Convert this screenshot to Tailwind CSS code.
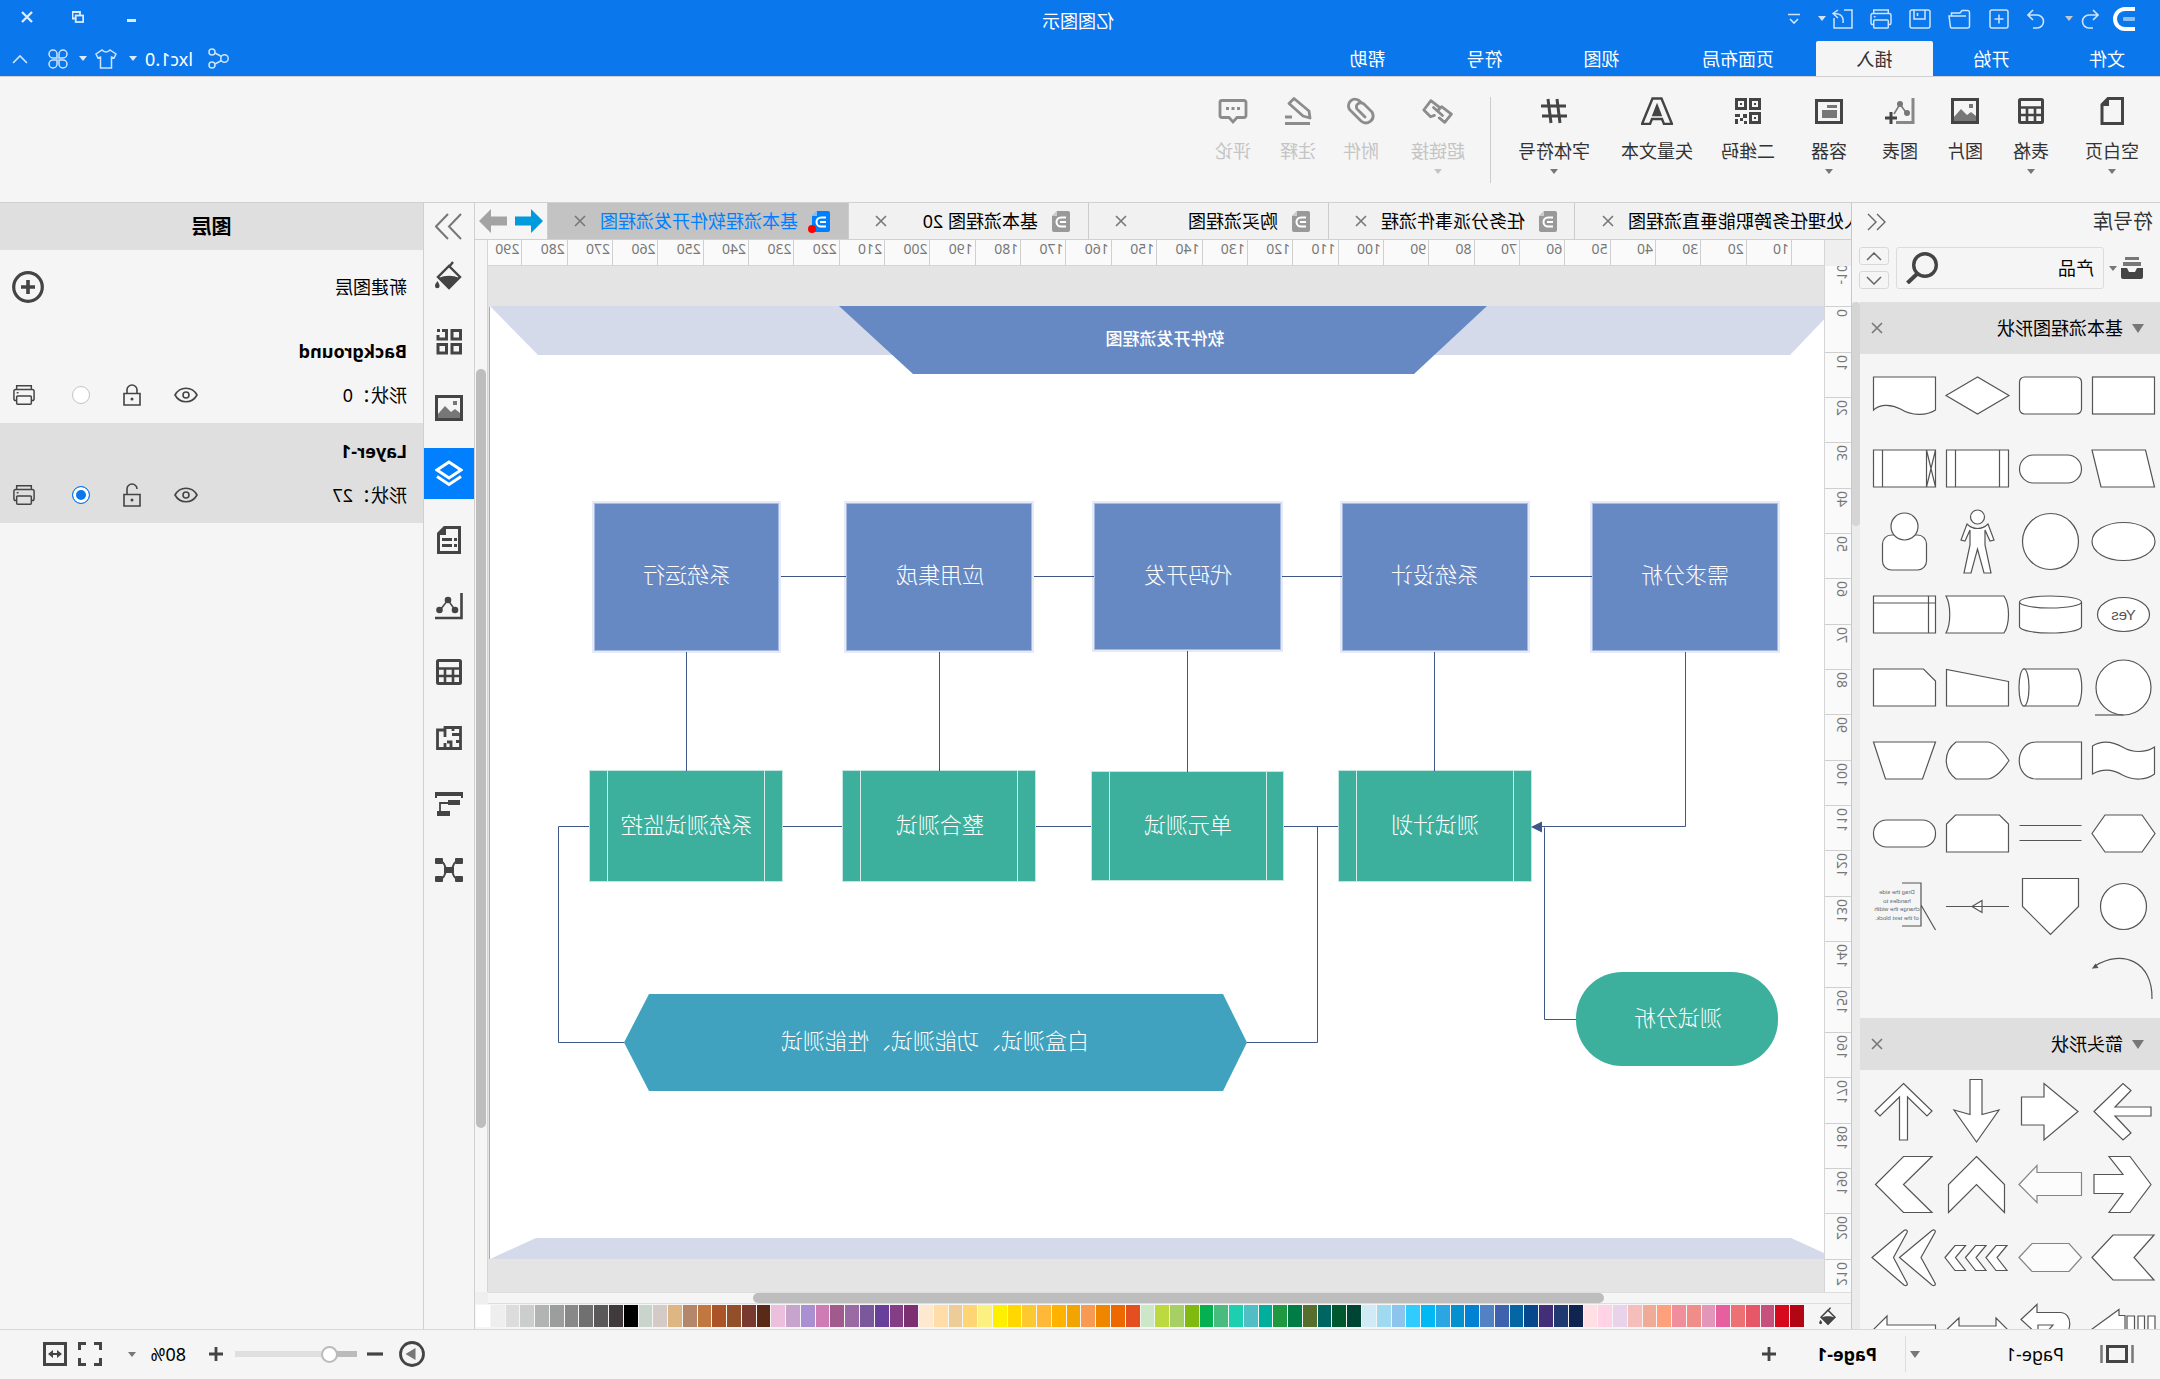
<!DOCTYPE html>
<html lang="zh-CN">
<head>
<meta charset="utf-8">
<title>亿图图示</title>
<script src="https://cdn.jsdelivr.net/npm/@tailwindcss/browser@4"></script>
</head>
<body class="overflow-hidden bg-[#f5f5f5]">
<svg class="hidden">
  <defs>
    <symbol id="i-doc" viewBox="0 0 18 21"><path d="M2 0h11l5 5v14a2 2 0 0 1-2 2H2a2 2 0 0 1-2-2V2a2 2 0 0 1 2-2z" fill="currentColor"/><path d="M13 0l5 5h-5z" fill="#fff" opacity=".5"/><path d="M4 6.500h5a4.500 4.500 0 0 1 0 9H4M4 11h6" fill="none" stroke="#fff" stroke-width="2"/></symbol>
    <symbol id="i-x" viewBox="0 0 12 12"><path d="M1 1l10 10M11 1L1 11" fill="none" stroke="currentColor" stroke-width="1.600"/></symbol>
    <symbol id="i-caret" viewBox="0 0 8 5"><path d="M0 0h8L4 5z" fill="currentColor"/></symbol>
    <symbol id="i-bucket" viewBox="0 0 28 30"><path d="M10 1l4 5M14 5L3 16l11 11 11-11z" fill="none" stroke="currentColor" stroke-width="2.400"/><path d="M4 17c6-3 14-3 20 0L14 28z" fill="currentColor"/><path d="M25.500 20c2 3 2.500 3.500 2.500 5a2.300 2.300 0 0 1-4.600 0c0-1.500.6-2 2.100-5z" fill="currentColor"/></symbol>
    <symbol id="i-image" viewBox="0 0 28 26"><rect x="1.500" y="1.500" width="25" height="23" fill="none" stroke="#444" stroke-width="3"/><path d="M3 23v-5l5-4 4 3 6-6 7 8v4z" fill="#777"/><rect x="6" y="6" width="4" height="4" fill="#777"/></symbol>
    <symbol id="i-table" viewBox="0 0 26 26"><rect x="1.500" y="1.500" width="23" height="23" rx="1" fill="none" stroke="#444" stroke-width="3"/><path d="M1 9.500h24M1 17h24M9 10v15M17 10v15" stroke="#444" stroke-width="2.600" fill="none"/></symbol>
    <symbol id="i-print" viewBox="0 0 24 22"><g fill="none" stroke="currentColor" stroke-width="1.600"><path d="M4 5V1h16v4M4 17H3a2 2 0 0 1-2-2V7a2 2 0 0 1 2-2h18a2 2 0 0 1 2 2v8a2 2 0 0 1-2 2h-1"/><rect x="4" y="12" width="16" height="9" rx="1"/><path d="M18 8.500h2"/></g></symbol>
    <symbol id="i-eye" viewBox="0 0 24 16"><g fill="none" stroke="currentColor" stroke-width="1.600"><path d="M1 8c5-9 17-9 22 0-5 9-17 9-22 0z"/><circle cx="12" cy="8" r="3"/></g></symbol>
  </defs>
</svg>
<div class="flex h-screen w-full flex-col overflow-hidden -scale-x-100 bg-[#f5f5f5] font-['Noto_Sans','Noto_Sans_CJK_SC',sans-serif] text-[18px] leading-6 text-black">

  <!-- Title bar and menu -->
  <header class="shrink-0 bg-[#0a77ec] text-white">
    <div class="flex h-[41px] items-center">
      <div class="flex flex-1 items-center pl-[25px] pb-1">
        <svg class="h-6 w-[22px]" viewBox="0 0 22 24"><path d="M0 2h10a10 10 0 0 1 0 20H0" fill="none" stroke="#fff" stroke-width="4"/><rect x="0" y="10" width="12" height="4" rx="1" fill="#8bbdf5"/></svg>
        <button aria-label="撤销" class="ml-[14px]"><svg class="h-5 w-[18px]" viewBox="0 0 18 20"><path d="M6 1L1 6l5 5M1 6h9a6.500 6.500 0 0 1 0 13H6" fill="none" stroke="#cfe3fb" stroke-width="1.600"/></svg></button>
        <svg class="ml-2 h-[5px] w-2 text-[#c8c8c8]"><use href="#i-caret"/></svg>
        <button aria-label="重做" class="ml-5"><svg class="h-5 w-[18px]" viewBox="0 0 18 20"><path d="M12 1l5 5-5 5M17 6H8a6.500 6.500 0 0 0 0 13h4" fill="none" stroke="#cfe3fb" stroke-width="1.600"/></svg></button>
        <button aria-label="新建" class="ml-[18px]"><svg class="size-5" viewBox="0 0 20 20"><g fill="none" stroke="#cfe3fb" stroke-width="1.500"><rect x="1" y="1" width="18" height="18" rx="2"/><path d="M10 5.500v9M5.500 10h9"/></g></svg></button>
        <button aria-label="打开" class="ml-[18px]"><svg class="h-5 w-6" viewBox="0 0 24 20"><path d="M1.500 17V3.500a2 2 0 0 1 2-2H9l2 2.500h8.500v3M5 7h17l-1.500 11a1.500 1.500 0 0 1-1.500 1H3.500a2 2 0 0 1-2-2V9" fill="none" stroke="#cfe3fb" stroke-width="1.500"/></svg></button>
        <button aria-label="保存" class="ml-4"><svg class="h-5 w-[22px]" viewBox="0 0 22 20"><g fill="none" stroke="#cfe3fb" stroke-width="1.500"><rect x="1" y="1" width="20" height="18" rx="2"/><path d="M6 1v9h11V1M13.500 4v3"/></g></svg></button>
        <button aria-label="打印" class="ml-4 text-[#cfe3fb]"><svg class="h-5 w-6"><use href="#i-print"/></svg></button>
        <button aria-label="导出" class="ml-4"><svg class="h-5 w-[21px]" viewBox="0 0 21 20"><path d="M9 1H1v18h18V9M10 14c-1-6 2-9.500 9-9.500M15 1l5 3.500L15 9" fill="none" stroke="#cfe3fb" stroke-width="1.500"/></svg></button>
        <svg class="ml-[6px] h-[5px] w-2 text-[#cfe3fb]"><use href="#i-caret"/></svg>
        <button aria-label="自定义" class="ml-[18px]"><svg class="h-3 w-3" viewBox="0 0 12 12"><path d="M0 1.500h12M2 6l4 4 4-4" fill="none" stroke="#cfe3fb" stroke-width="1.600"/></svg></button>
      </div>
      <h1>亿图图示</h1>
      <div class="flex flex-1 items-center justify-end pr-[21px] pb-2">
        <button aria-label="最小化" class="mt-2"><svg class="h-1 w-[9px]" viewBox="0 0 9 4"><path d="M0 1.500h9" stroke="#dcebfd" stroke-width="3"/></svg></button>
        <button aria-label="还原" class="ml-[43px]"><svg class="h-3 w-3" viewBox="0 0 12 12"><path d="M4 4V1h7.500v6.500H8.500" stroke="#dcebfd" stroke-width="1.800" fill="none"/><rect x=".8" y="4.500" width="7.500" height="6.500" fill="none" stroke="#dcebfd" stroke-width="1.800"/></svg></button>
        <button aria-label="关闭" class="ml-[39px]"><svg class="size-3" viewBox="0 0 12 12"><path d="M1 1l10 10M11 1L1 11" stroke="#dcebfd" stroke-width="2.400"/></svg></button>
      </div>
    </div>
    <div class="flex h-[35px] items-stretch">
      <nav class="flex flex-1 items-stretch [&>a]:flex [&>a]:items-center [&>a]:justify-center [&>a]:pt-px">
        <a href="#" class="mr-1 w-[106px]">文件</a>
        <a href="#" class="w-[117px]">开始</a>
        <a href="#" class="w-[117px] rounded-t-[2px] bg-[#f5f5f5] text-[#333]">插入</a>
        <a href="#" class="w-[156px]">页面布局</a>
        <a href="#" class="w-[117px]">视图</a>
        <a href="#" class="w-[117px]">符号</a>
        <a href="#" class="w-[117px]">帮助</a>
      </nav>
      <div class="flex items-center pr-3">
        <button aria-label="分享"><svg class="size-[21px]" viewBox="0 0 21 21"><g fill="none" stroke="#cfe3fb" stroke-width="1.500"><circle cx="4.500" cy="10.500" r="3.700"/><circle cx="17" cy="4" r="3"/><circle cx="17" cy="17" r="3"/><path d="M7.500 8.500L14 5M7.500 12.500L14 16"/></g></svg></button>
        <button class="ml-[15px] flex items-center">lxc1.0<svg class="ml-2 h-[5px] w-2 text-[#dcebfd]"><use href="#i-caret"/></svg></button>
        <button class="ml-3 flex items-center" aria-label="主题"><svg class="h-5 w-[22px]" viewBox="0 0 22 20"><path d="M7 1l-6 4 2 4 2.500-1v11h11V8L19 9l2-4-6-4c-2 2.500-6 2.500-8 0z" fill="none" stroke="#cfe3fb" stroke-width="1.500"/></svg><svg class="ml-2 h-[5px] w-2 text-[#dcebfd]"><use href="#i-caret"/></svg></button>
        <button aria-label="应用" class="ml-[11px]"><svg class="size-5" viewBox="0 0 20 20"><path d="M9 9H5a4 4 0 1 1 4-4zM11 9V5a4 4 0 1 1 4 4zM9 11v4a4 4 0 1 1-4-4zM11 11h4a4 4 0 1 1-4 4z" fill="none" stroke="#cfe3fb" stroke-width="1.500"/></svg></button>
        <button aria-label="折叠功能区" class="ml-5"><svg class="h-[10px] w-4" viewBox="0 0 16 10"><path d="M1 9l7-7 7 7" fill="none" stroke="#cfe3fb" stroke-width="1.600"/></svg></button>
      </div>
    </div>
  </header>

  <!-- Ribbon -->
  <div class="flex h-[127px] shrink-0 items-start border-y border-[#d0d0d0] pt-5 text-[#333] [&>button]:flex [&>button]:flex-col [&>button]:items-center [&>button]:whitespace-nowrap [&_svg.i]:h-7 [&_svg.i]:w-8 [&_span]:mt-[14px]">
    <button class="w-24"><svg class="i" viewBox="0 0 32 28"><path d="M5.500 1.500H20l6 6v19H5.500z" fill="none" stroke="#444" stroke-width="3"/><path d="M19 1l8 8h-8z" fill="#444"/></svg><span>空白页</span><svg class="mt-[6px] h-[5px] w-2 text-[#777]"><use href="#i-caret"/></svg></button>
    <button class="w-[66px]"><svg class="i"><use href="#i-table" x="3" y="1" width="26" height="26"/></svg><span>表格</span><svg class="mt-[6px] h-[5px] w-2 text-[#777]"><use href="#i-caret"/></svg></button>
    <button class="w-[66px]"><svg class="i"><use href="#i-image" x="2" y="1" width="28" height="26"/></svg><span>图片</span></button>
    <button class="w-16"><svg class="i" viewBox="0 0 32 28"><path d="M3 1v24.500h17" fill="none" stroke="#888" stroke-width="3"/><path d="M9 17l7-10 6 10" fill="none" stroke="#777" stroke-width="1.500"/><circle cx="9" cy="16" r="3" fill="#777"/><circle cx="16" cy="7" r="3" fill="#777"/><path d="M25 15v12M19 21h12" stroke="#444" stroke-width="3"/></svg><span>图表</span></button>
    <button class="w-[78px]"><svg class="i" viewBox="0 0 32 28"><rect x="3.500" y="3.500" width="25" height="22" fill="none" stroke="#444" stroke-width="3"/><path d="M8 8h10v3H8zM8 13h15v8H8z" fill="#777"/></svg><span>容器</span><svg class="mt-[6px] h-[5px] w-2 text-[#777]"><use href="#i-caret"/></svg></button>
    <button class="w-[84px]"><svg class="i" viewBox="0 0 32 28"><g fill="none" stroke="#444" stroke-width="3"><rect x="4.500" y="2.500" width="9" height="9"/><rect x="18.500" y="2.500" width="9" height="9"/><rect x="4.500" y="16.500" width="9" height="9"/></g><path d="M8 6h2v2H8zM22 6h2v2h-2zM8 20h2v2H8zM17 17h4v4h-4zM21 21h3v3h-3zM24 17h5v3h-5zM17 24h3v3h-3zM26 22h3v5h-3z" fill="#444"/></svg><span>二维码</span></button>
    <button class="w-[98px]"><svg class="i" viewBox="0 0 32 28"><path d="M11.500 1.500h9L31 27h-8l-2-5H11l-2 5H1zM16 9l-3.500 9h7z" fill="none" stroke="#444" stroke-width="2.400"/><path d="M16 8l-4 10h8z" fill="#444"/></svg><span>矢量文本</span></button>
    <button class="w-[108px]"><svg class="i" viewBox="0 0 32 28"><path d="M13 2l-3 24M22 2l-3 24M4 9h25M3 19h25" fill="none" stroke="#444" stroke-width="3"/></svg><span>字体符号</span><svg class="mt-[6px] h-[5px] w-2 text-[#777]"><use href="#i-caret"/></svg></button>
    <div class="ml-[9px] h-[86px] w-px bg-[#ccc]"></div>
    <button disabled class="w-[104px] text-[#c4c4c4]"><svg class="i" viewBox="0 0 32 28"><g fill="none" stroke="#8c8c8c" stroke-width="2.800" stroke-linejoin="round" stroke-linecap="round"><path d="M15.500 21l-5 5L3 18.500l9-8.500 3 2.500M20 18l4 1 6-7.500L22 3l-8 7.500 2 3.500" transform="rotate(6 16 14)"/><path d="M11.500 18.500l9-8"/></g></svg><span>超链接</span><svg class="mt-[6px] h-[5px] w-2"><use href="#i-caret"/></svg></button>
    <button disabled class="w-[50px] text-[#c4c4c4]"><svg class="i" viewBox="0 0 32 28"><path d="M15 6l3-2.500c6-4 13 2 9.500 9L16 24c-6 5-15-1-11-9l8-8c5-3 9 1 7 5l-8 8" fill="none" stroke="#8c8c8c" stroke-width="2.800" stroke-linecap="round"/></svg><span>附件</span></button>
    <button disabled class="w-[76px] text-[#c4c4c4]"><svg class="i" viewBox="0 0 32 28"><path d="M4 21l1-7L20 1.500l5 5L11 19zM22 20h7M4 26.500h25" fill="none" stroke="#8c8c8c" stroke-width="2.800" stroke-linejoin="round"/></svg><span>注释</span></button>
    <button disabled class="w-[54px] text-[#c4c4c4]"><svg class="i" viewBox="0 0 32 28"><path d="M5 3.500h22a2 2 0 0 1 2 2v13a2 2 0 0 1-2 2h-7L16 25l-4-4.500H5a2 2 0 0 1-2-2v-13a2 2 0 0 1 2-2z" fill="none" stroke="#8c8c8c" stroke-width="2.800"/><path d="M9 10h3v3H9zM14.500 10h3v3h-3zM20 10h3v3h-3z" fill="#8c8c8c"/></svg><span>评论</span></button>
  </div>

  <div class="flex min-h-0 flex-1">
    <!-- Symbol library -->
    <aside class="flex w-[309px] shrink-0 flex-col overflow-hidden border-r border-[#c8c8c8]">
      <div class="flex h-[38px] shrink-0 items-center justify-between pr-[15px] pl-[7px]">
        <h2 class="text-[20px] text-[#333]">符号库</h2>
        <button aria-label="收起"><svg class="h-[18px] w-[19px]" viewBox="0 0 19 18"><path d="M9 1L1 9l8 8M18 1l-8 8 8 8" fill="none" stroke="#666" stroke-width="1.400"/></svg></button>
      </div>
      <div class="flex h-[61px] shrink-0 items-start pt-[6px] pl-[17px]">
        <button class="flex h-[42px] items-center" aria-label="符号库菜单"><svg class="h-[22px] w-[22px]" viewBox="0 0 22 22"><path d="M4 0h14v3H4zM2 5h18v4H2z" fill="#777"/><path d="M0 11h6l2 4h6l2-4h6v9a2 2 0 0 1-2 2H2a2 2 0 0 1-2-2z" fill="#444"/></svg><svg class="ml-1 h-[5px] w-2 text-[#777]"><use href="#i-caret"/></svg></button>
        <div class="ml-[5px] flex h-[42px] w-[208px] items-center rounded-[3px] border border-[#dcdcdc] px-[9px]">
          <input aria-label="搜索符号" value="产品" class="w-0 flex-1 bg-transparent outline-none">
          <button aria-label="搜索"><svg class="h-8 w-8" viewBox="0 0 32 32"><circle cx="13" cy="13" r="11.300" fill="none" stroke="#444" stroke-width="3.400"/><path d="M20.500 21.500l10 9.500" stroke="#444" stroke-width="4"/></svg></button>
        </div>
        <div class="ml-[7px] flex flex-col gap-[6px]">
          <button aria-label="上" class="flex h-[18px] w-[30px] items-center justify-center rounded-[3px] border border-[#d8d8d8]"><svg class="h-[9px] w-4" viewBox="0 0 16 9"><path d="M1 8l7-7 7 7" fill="none" stroke="#666" stroke-width="1.500"/></svg></button>
          <button aria-label="下" class="flex h-[18px] w-[30px] items-center justify-center rounded-[3px] border border-[#d8d8d8]"><svg class="h-[9px] w-4" viewBox="0 0 16 9"><path d="M1 1l7 7 7-7" fill="none" stroke="#666" stroke-width="1.500"/></svg></button>
        </div>
      </div>
      <div class="flex min-h-0 flex-1">
        <div class="w-[300px] overflow-hidden">
          <div class="flex h-[52px] items-center bg-[#dfdfdf] pr-[11px] pl-4"><svg class="h-[9px] w-3 text-[#777]" viewBox="0 0 8 5" preserveAspectRatio="none"><path d="M0 0h8L4 5z" fill="currentColor"/></svg><h3 class="ml-[9px] flex-1">基本流程图形状</h3><button aria-label="关闭"><svg class="size-3 text-[#777]"><use href="#i-x"/></svg></button></div>
          <div class="mt-[5px] mb-[2px] grid w-[292px] grid-cols-4 [&>svg]:size-[73px] [&>svg]:fill-white [&>svg]:stroke-[#555] [&>svg]:stroke-[1.2]">
            <svg><rect x="5.500" y="18" width="62" height="37"/></svg>
            <svg><rect x="5.500" y="18" width="62" height="37" rx="5"/></svg>
            <svg><path d="M36.500 18L68 36.500 36.500 55 5 36.500z"/></svg>
            <svg><path d="M5.500 18h62v33c-5-5-16-7-27-1-11 7-26 7-35 1z"/></svg>
            <svg><path d="M14.500 18H68l-9 37H5.500z"/></svg>
            <svg><rect x="5.500" y="23" width="62" height="28" rx="14"/></svg>
            <svg><path d="M5.500 18h62v37h-62zM14.500 18v37M58.500 18v37"/></svg>
            <svg><path d="M5.500 18h62v37h-62zM14.500 18v37M58.500 18v37M5.500 18l9 37M14.500 18l-9 37"/></svg>
            <svg><ellipse cx="36.500" cy="36.500" rx="31.500" ry="19"/></svg>
            <svg><circle cx="36.500" cy="36.500" r="28"/></svg>
            <svg><path d="M26 19l-6 16 4 1 5-11v15l-6 28h7l6.500-24L43 68h7l-6-28V25l5 11 4-1-6-16c-6 6-15 6-21 0z"/><circle cx="36.500" cy="12" r="7"/></svg>
            <svg><rect x="14.500" y="30" width="44" height="35" rx="9"/><circle cx="36.500" cy="21.500" r="13.500"/></svg>
            <svg><ellipse cx="36.500" cy="36.500" rx="26" ry="17"/><text x="36.500" y="42" text-anchor="middle" font-size="15" class="fill-[#555] stroke-none font-['Liberation_Sans']">Yes</text></svg>
            <svg><path d="M5.500 24v25c4 8 58 8 62 0V24"/><ellipse cx="36.500" cy="24" rx="31" ry="6"/></svg>
            <svg><path d="M10 18h58c-5 9-5 28 0 37H10c-6-9-6-28 0-37z"/></svg>
            <svg><path d="M5.500 18h62v37h-62zM5.500 25h62M12.500 18v37"/></svg>
            <svg><circle cx="36.500" cy="36.500" r="27.500"/><path d="M36.500 64H65" /></svg>
            <svg><path d="M9 18h54c-6 6-6 31 0 37H9c-5-9-5-28 0-37z"/><ellipse cx="63" cy="36.500" rx="5" ry="18.500"/></svg>
            <svg><path d="M5.500 30.500l62-12V55h-62z"/></svg>
            <svg><path d="M17.500 18h50v37h-62V30z"/></svg>
            <svg><path d="M5.500 23c9 6 22 6 32 0 11-6 22-6 30-1v28c-9-5-20-5-30 1-11 6-24 5-32-1z"/></svg>
            <svg><path d="M5.500 18h45c23 0 23 37 0 37h-45z"/></svg>
            <svg><path d="M5 36.500C12 26 20 18 27 18h31c13 10 13 27 0 37H27c-7 0-15-8-22-18.500z"/></svg>
            <svg><path d="M5.500 18h62l-12 37h-37z"/></svg>
            <svg><path d="M5 36.500L18 18h37l13 18.500L55 55H18z"/></svg>
            <svg><path d="M5.500 28.500h62M5.500 43.500h62"/></svg>
            <svg><path d="M14.500 18h44l9 9v28h-62V27z"/></svg>
            <svg><rect x="5.500" y="23" width="62" height="27" rx="13"/></svg>
            <svg><circle cx="36.500" cy="36.500" r="23"/></svg>
            <svg><path d="M8.500 8.500h56v28l-28 28-28-28z"/></svg>
            <svg><path d="M5 36.500h63M32 30.500l10 6-10 6z"/></svg>
            <svg><path d="M39 13H20v43h19M20 35L5.500 60" fill="none"/><g text-anchor="middle" font-size="6" class="fill-[#666] stroke-none font-['Liberation_Sans']"><text x="44" y="24">Drag the side</text><text x="44" y="33">handles to</text><text x="44" y="41">change the width</text><text x="44" y="50">of the text block.</text></g></svg>
            <svg><path d="M8 56C7 18 38 6 65 23" fill="none"/><path d="M67 25l-4.500-.5 2-3z" class="fill-[#444]"/></svg>
          </div>
          <div class="flex h-[52px] items-center bg-[#dfdfdf] pr-[11px] pl-4"><svg class="h-[9px] w-3 text-[#777]" viewBox="0 0 8 5" preserveAspectRatio="none"><path d="M0 0h8L4 5z" fill="currentColor"/></svg><h3 class="ml-[9px] flex-1">箭头形状</h3><button aria-label="关闭"><svg class="size-3 text-[#777]"><use href="#i-x"/></svg></button></div>
          <div class="mt-[5px] grid w-[292px] grid-cols-4 [&>svg]:size-[73px] [&>svg]:fill-white [&>svg]:stroke-[#555] [&>svg]:stroke-[1.2]">
            <svg><path d="M66 36.500L37 8.500l-8 7L45 32H9v9h36L29 58l8 7z"/></svg>
            <svg><path d="M9 36.500l34-28V22h22.500v28H43v15z"/></svg>
            <svg><path d="M37.500 67L60 35l-16 4.500v-35H32v35L15 35z"/></svg>
            <svg><path d="M37.500 8.500L9 36l5 5 19.500-19v43h8V22L61 41l5-5z"/></svg>
            <svg><path d="M9 36.500L30 8.500h21L37 26.500h29v19H37l14 19H30z"/></svg>
            <svg opacity=".7"><path d="M68 36.500l-18-19v7H5.500v23H50v7z"/></svg>
            <svg><path d="M37.500 8.500l-28 28v28l28-28 28 28v-28z"/></svg>
            <svg><path d="M65.500 36.500l-28-28H9l28.500 28-28.500 28h28.500z"/></svg>
            <svg><path d="M68 36.500L47 14H6l20 22.500L6 59h41z"/></svg>
            <svg opacity=".7"><path d="M68 36.500l-13-14H18l-12.500 14 12.500 14h37z"/></svg>
            <svg><path d="M69 36.500L59 24.500H48.500l10 12-10 13H59zM48.500 36.500l-10-12H28l10 12-10 13h10.500zM28 36.500l-10-12H7l10 12-10 13h11z"/></svg>
            <svg><path d="M69 36.500L37 9.500c-2-1.500-4 0-3 2l13.500 25L34 62c-1 2 1 3.500 3 2zM41.500 36.500L9 9.500c-2-1.500-4 0-3 2l14 25L6 62c-1 2 1 3.500 3 2z"/></svg>
            <svg><path d="M72 38L41 15.500v6h-6V50h6zM25.500 22H33v28h-7.500zM15.500 22H22v28h-6.500zM5 22h7v28H5z"/></svg>
            <svg><path d="M66 25.500l-16-15v8H27c-13 0-13 21 0 26h22V31H34l8 9h8z"/></svg>
            <svg><path d="M72 40L55 24v8H18v-8L2 40l16 14h37z"/></svg>
            <svg><path d="M72 40L54 22v9H5.500v18H54z"/></svg>
          </div>
        </div>
        <div class="flex-1 bg-[#ebebeb]"><div class="h-[224px] rounded-full bg-[#d5d5d5]"></div></div>
      </div>
    </aside>

    <!-- Documents -->
    <main class="flex min-w-0 flex-1 flex-col">
      <div class="flex h-[37px] shrink-0 items-stretch border-b border-[#d0d0d0] whitespace-nowrap [&>div]:flex [&>div]:items-center [&>div]:border-r [&>div]:border-[#ccc] [&>div]:bg-[#f1f1f1]">
        <div class="w-[277px] justify-end overflow-hidden pr-[27px]"><a href="#">人处理任务跨职能垂直流程图</a><button aria-label="关闭" class="ml-[14px]"><svg class="size-3 text-[#777]"><use href="#i-x"/></svg></button></div>
        <div class="w-[246px] pr-[26px] pl-[17px]"><svg class="h-[21px] w-[18px] text-[#999]"><use href="#i-doc"/></svg><a href="#" class="ml-[14px] flex-1">任务分派事件流程</a><button aria-label="关闭"><svg class="size-3 text-[#777]"><use href="#i-x"/></svg></button></div>
        <div class="w-[240px] pr-[26px] pl-[18px]"><svg class="h-[21px] w-[18px] text-[#999]"><use href="#i-doc"/></svg><a href="#" class="ml-[14px] flex-1">购买流程图</a><button aria-label="关闭"><svg class="size-3 text-[#777]"><use href="#i-x"/></svg></button></div>
        <div class="w-[240px] pr-[26px] pl-[18px]"><svg class="h-[21px] w-[18px] text-[#999]"><use href="#i-doc"/></svg><a href="#" class="ml-[14px] flex-1">基本流程图 20</a><button aria-label="关闭"><svg class="size-3 text-[#777]"><use href="#i-x"/></svg></button></div>
        <div class="w-[301px] pr-[26px] pl-[18px] !bg-[#c3c3c3]"><span class="relative h-[21px] w-[18px]"><svg class="h-[21px] w-[18px] text-[#0080ff]"><use href="#i-doc"/></svg><i class="absolute -right-1 -bottom-px size-2 rounded-full bg-[#f00]"></i></span><a href="#" class="ml-[14px] flex-1 text-[#0080ff]">基本流程软件开发流程图</a><button aria-label="关闭"><svg class="size-3 text-[#777]"><use href="#i-x"/></svg></button></div>
        <span class="flex items-center gap-2 pl-1"><button aria-label="上一个"><svg class="h-6 w-7" viewBox="0 0 28 24"><path d="M0 12L12 0v7.500h16v9H12V24z" fill="#009bdc"/></svg></button><button aria-label="下一个"><svg class="h-6 w-7" viewBox="0 0 28 24"><path d="M28 12L16 0v7.500H0v9h16V24z" fill="#a3a3a3"/></svg></button></span>
      </div>
      <div class="grid min-h-0 flex-1 grid-cols-[27px_minmax(0,1fr)_13px] grid-rows-[26px_minmax(0,1fr)_12px]">
        <div class="border-r border-[#d5d5d5] bg-[#efefef]"></div>
        <div class="overflow-hidden border-b border-[#d5d5d5] bg-[#fafafa]"><div id="ruler-x" class="mr-[-11px] ml-8 flex h-full text-[14px] leading-[18px] text-[#777]"></div></div>
        <div class="border-l border-[#d5d5d5] bg-[#f5f5f5]"></div>
        <div class="overflow-hidden border-r border-[#d5d5d5] bg-[#fafafa]"><div id="ruler-y" class="-mt-[5px] flex h-[calc(100%+17px)] flex-col text-[14px] leading-[18px] text-[#777]"></div></div>
        <div class="relative overflow-hidden bg-[#e4e4e4]">
          <svg class="absolute top-0 left-0 h-[1026px] w-[1336px]" viewBox="336 266 1336 1026">
            <path d="M323 306h1347v953H323z" fill="#fff"/><path d="M1670.500 307v952" stroke="#aaa"/>
            <path d="M323 306h1347l-48 49H370z" fill="#d4daea"/>
            <path d="M673 306h648l-74 68H746z" fill="#6689c4"/>
            <path d="M369 1238h1255l46 21H323z" fill="#d4daea"/>
            <g fill="none" stroke="#e6eaf5" stroke-width="4"><path d="M382 503h186v148H382zM632 503h186v148H632zM879 503h187v147H879zM1128 503h186v148h-186zM1381 503h185v148h-185z"/></g>
            <g fill="#6689c4" stroke="#a5bae2" stroke-width="1"><path d="M382.500 503.500h185v147h-185zM632.500 503.500h185v147h-185zM879.500 503.500h186v146h-186zM1128.500 503.500h185v147h-185zM1381.500 503.500h184v147h-184z"/></g>
            <g fill="#3db09d" stroke="#c3e6df" stroke-width="1"><path d="M628.500 770.500h193v111h-193zM876.500 771.500h192v109h-192zM1124.500 770.500h193v111h-193zM1377.500 770.500h193v111h-193z"/><path d="M646.500 771v110M803.500 771v110M893.500 772v108M1050.500 772v108M1142.500 771v110M1299.500 771v110M1395.500 771v110M1552.500 771v110" stroke="#d4ede8"/></g>
            <rect x="382" y="972" width="202" height="94" rx="46" fill="#3db09d"/>
            <path d="M913 1042.500L937 994h574l25 48.500-25 48.500H937z" fill="#40a2be"/>
            <g fill="none" stroke="#3f5786"><path d="M568 576.500h62M818 576.500h60M1066 576.500h60M1314 576.500h65M725.500 652v119M972.500 651v121M1220.500 652v119M1473.500 652v119M474.500 652v174.500H620M822 826.500h54M1069 826.500h55M1318 826.500h59M584 1019.500h31.500v-192M913 1042.500h-70.500v-216M1536 1042.500h65.500v-216H1571"/></g>
            <path d="M629 827l-11-5.500v11z" fill="#3f5786"/>
            <text x="995" y="345" text-anchor="middle" font-size="17" class="fill-white font-medium">软件开发流程图</text>
            <g text-anchor="middle" font-size="22" class="fill-white font-light">
              <text x="475" y="583">需求分析</text><text x="725" y="583">系统设计</text><text x="972" y="583">代码开发</text><text x="1220" y="583">应用集成</text><text x="1473" y="583">系统运行</text>
              <text x="725" y="833">测试计划</text><text x="972" y="833">单元测试</text><text x="1220" y="833">整合测试</text><text x="1473" y="833">系统测试监控</text>
              <text x="482" y="1026">测试分析</text><text x="1225" y="1049">白盒测试、功能测试、性能测试</text>
            </g>
          </svg>
        </div>
        <div class="border-l border-[#d5d5d5] bg-[#f5f5f5] px-px pt-[103px]"><div class="h-[759px] rounded-full bg-[#bdbdbd]"></div></div>
        <div class="border-y border-[#ddd] bg-[#f5f5f5]"></div>
        <div class="border-y border-[#ddd] bg-[#f5f5f5] pr-[265px] pl-[220px]"><div class="h-full rounded-full bg-[#bdbdbd]"></div></div>
        <div class="bg-[#efefef]"></div>
      </div>
      <div class="flex h-[25px] shrink-0 items-center pr-px pb-px pl-[14px]">
        <svg class="h-[19px] w-[18px] shrink-0 text-[#444]"><use href="#i-bucket"/></svg>
        <div id="swatches" class="ml-[14px] flex h-[22px] flex-1"></div>
      </div>
    </main>

    <!-- Tool strip -->
    <nav class="flex w-[52px] shrink-0 flex-col items-stretch gap-[15px] border-x border-[#d0d0d0] text-[#444] [&>button]:flex [&>button]:h-[51px] [&>button]:items-center [&>button]:justify-center">
      <button aria-label="展开" class="-mb-[19px] pb-1"><svg class="h-[27px] w-[27px]" viewBox="0 0 27 27"><path d="M1 1l12 12.500L1 26M14 1l12 12.500L14 26" fill="none" stroke="#777" stroke-width="2"/></svg></button>
      <button aria-label="填充"><svg class="h-[30px] w-7"><use href="#i-bucket"/></svg></button>
      <button aria-label="组件"><svg class="size-[26px]" viewBox="0 0 26 26"><g fill="none" stroke="#444" stroke-width="3"><rect x="1.500" y="1.500" width="8.500" height="8.500"/><rect x="1.500" y="15.500" width="8.500" height="8.500"/><rect x="15.500" y="15.500" width="8.500" height="8.500"/><path d="M20 1.500h-4.500V10H24V6M22 1.500h3"/></g></svg></button>
      <button aria-label="图片"><svg class="h-[26px] w-7"><use href="#i-image"/></svg></button>
      <button aria-label="图层" class="bg-[#0080ff]"><svg class="h-[27px] w-7" viewBox="0 0 28 27"><path d="M14 2l12 8-12 8L2 10zM2 16.500l12 8 12-8" fill="none" stroke="#fff" stroke-width="3"/></svg></button>
      <button aria-label="注释"><svg class="h-7 w-6" viewBox="0 0 24 28"><path d="M1.500 1.500h15l6 6v19h-21z" fill="none" stroke="#444" stroke-width="3"/><path d="M15 1l8 8h-8zM4 12h3v3H4zM9 12h10v3H9zM4 18h3v3H4zM9 18h10v3H9z" fill="#444"/></svg></button>
      <button aria-label="图表"><svg class="size-7" viewBox="0 0 28 28"><path d="M1.500 1v25H28" fill="none" stroke="#444" stroke-width="2.600"/><path d="M8 18l7-10 8 10" fill="none" stroke="#444" stroke-width="1.500"/><circle cx="8" cy="18" r="3.300" fill="#444"/><circle cx="15" cy="8" r="3.300" fill="#444"/><circle cx="23.500" cy="18" r="3.300" fill="#444"/></svg></button>
      <button aria-label="表格"><svg class="size-[26px]"><use href="#i-table"/></svg></button>
      <button aria-label="平面图"><svg class="h-6 w-[26px]" viewBox="0 0 26 24"><path d="M1.500 1.500H17V4h7.500v18.500h-23zM17 4v7M1.500 8.500H10M9 1.500V5M1.500 15.500H6M11 22v-6h4M17 17v5" fill="none" stroke="#444" stroke-width="2.800"/></svg></button>
      <button aria-label="甘特图"><svg class="h-6 w-7" viewBox="0 0 28 24"><path d="M0 0h28v6h-2V4H2v2H0zM3 8h12v5H3zM13 19h13v5H13z" fill="#444"/><path d="M15 11h8v8" fill="none" stroke="#444" stroke-width="1.800"/></svg></button>
      <button aria-label="思维导图"><svg class="h-6 w-7" viewBox="0 0 28 24"><path d="M4 3c8 0 4 9 10 9s2-9 10-9M4 21c8 0 4-9 10-9s2 9 10 9" fill="none" stroke="#444" stroke-width="2"/><g fill="#444"><rect width="8" height="6" rx="1"/><rect x="20" width="8" height="6" rx="1"/><rect y="18" width="8" height="6" rx="1"/><rect x="20" y="18" width="8" height="6" rx="1"/><rect x="9" y="9" width="10" height="6"/></g></svg></button>
    </nav>

    <!-- Layers panel -->
    <aside class="w-[423px] shrink-0">
      <h2 class="flex h-[47px] items-center justify-center bg-[#dfdfdf] text-[20px] font-bold">图层</h2>
      <div class="flex h-[73px] items-center justify-between pr-3 pl-4"><span>新建图层</span><button aria-label="新建图层"><svg class="size-8" viewBox="0 0 32 32"><circle cx="16" cy="16" r="14.300" fill="none" stroke="#444" stroke-width="3.200"/><path d="M16 9v14M9 16h14" stroke="#444" stroke-width="3.600"/></svg></button></div>
      <div class="h-[100px] pt-4 pr-[13px] pl-4">
        <h3 class="font-bold">Background</h3>
        <div class="mt-5 flex items-center text-[#444]"><span class="flex-1 text-black">形状：0</span>
          <button aria-label="可见"><svg class="h-4 w-6"><use href="#i-eye"/></svg></button>
          <button aria-label="锁定" class="ml-[33px]"><svg class="h-[22px] w-[18px]" viewBox="0 0 18 22"><path d="M1 9.500h16V21H1zM4 9V6a5 5 0 0 1 10 0v3" fill="none" stroke="#444" stroke-width="1.600"/><circle cx="9" cy="15" r="1.500" fill="#444"/></svg></button>
          <input type="radio" name="layer" aria-label="Background" class="ml-[33px] size-[18px] appearance-none rounded-full border border-[#c4c4c4] bg-white">
          <button aria-label="打印" class="ml-[37px]"><svg class="h-[22px] w-[22px]"><use href="#i-print"/></svg></button></div>
      </div>
      <div class="h-[100px] bg-[#dfdfdf] pt-4 pr-[13px] pl-4">
        <h3 class="font-bold">Layer-1</h3>
        <div class="mt-5 flex items-center text-[#444]"><span class="flex-1 text-black">形状：27</span>
          <button aria-label="可见"><svg class="h-4 w-6"><use href="#i-eye"/></svg></button>
          <button aria-label="锁定" class="ml-[33px]"><svg class="h-6 w-[18px]" viewBox="0 0 18 24"><path d="M1 11.500h16V23H1zM4 11V6a5 5 0 0 1 10 0" fill="none" stroke="#444" stroke-width="1.600" transform="matrix(-1 0 0 1 18 0)"/><circle cx="9" cy="17" r="1.500" fill="#444"/></svg></button>
          <input type="radio" name="layer" aria-label="Layer-1" checked class="ml-[33px] size-[18px] appearance-none rounded-full border border-[#0a77ec] bg-[#0a77ec] shadow-[inset_0_0_0_3px_#fff]">
          <button aria-label="打印" class="ml-[37px]"><svg class="h-[22px] w-[22px]"><use href="#i-print"/></svg></button></div>
      </div>
    </aside>
  </div>

  <!-- Status bar -->
  <footer class="flex h-[50px] shrink-0 items-center border-t border-[#d8d8d8] pr-[43px] pb-px pl-[26px]">
    <button aria-label="页面视图"><svg class="h-[18px] w-[34px]" viewBox="0 0 34 18"><path d="M1.500 0v18M32.500 0v18" stroke="#777" stroke-width="2.500"/><rect x="7.500" y="1.500" width="19" height="15" fill="none" stroke="#444" stroke-width="3"/></svg></button>
    <button class="ml-9 w-[144px] text-left">Page-1</button>
    <svg class="h-[7px] w-[10px] text-[#777]" viewBox="0 0 8 5" preserveAspectRatio="none"><path d="M0 0h8L4 5z" fill="currentColor"/></svg>
    <div class="ml-1 h-9 w-px bg-[#ddd]"></div>
    <button class="ml-7 font-bold">Page-1</button>
    <button aria-label="添加页面" class="ml-10"><svg class="size-4" viewBox="0 0 16 16"><path d="M8 1v14M1 8h14" stroke="#444" stroke-width="2.800"/></svg></button>
    <div class="flex-1"></div>
    <button aria-label="播放"><svg class="size-[26px]" viewBox="0 0 26 26"><circle cx="13" cy="13" r="11.500" fill="none" stroke="#444" stroke-width="2.800"/><path d="M9.500 7l10 6-10 6z" fill="#777"/></svg></button>
    <button aria-label="缩小" class="ml-4"><svg class="size-4" viewBox="0 0 16 16"><path d="M0 8h16" stroke="#444" stroke-width="3.200"/></svg></button>
    <input type="range" aria-label="缩放" min="0" max="100" value="18" class="ml-[10px] h-[18px] w-[122px] appearance-none bg-[linear-gradient(to_right,#bbb_24%,#dfdfdf_24%)] bg-[length:100%_6px] bg-center bg-no-repeat [&::-webkit-slider-thumb]:size-[17px] [&::-webkit-slider-thumb]:appearance-none [&::-webkit-slider-thumb]:rounded-full [&::-webkit-slider-thumb]:border-2 [&::-webkit-slider-thumb]:border-[#bbb] [&::-webkit-slider-thumb]:bg-white">
    <button aria-label="放大" class="ml-[11px]"><svg class="size-4" viewBox="0 0 16 16"><path d="M8 1v14M1 8h14" stroke="#444" stroke-width="2.800"/></svg></button>
    <button class="ml-[22px] flex w-[58px] items-center justify-between">80%<svg class="h-[5px] w-2 text-[#777]"><use href="#i-caret"/></svg></button>
    <button aria-label="全屏" class="ml-[26px]"><svg class="size-6" viewBox="0 0 24 24"><path d="M8 1.500H1.500V8M16 1.500h6.500V8M8 22.500H1.500V16M16 22.500h6.500V16" fill="none" stroke="#444" stroke-width="3"/></svg></button>
    <button aria-label="适合宽度" class="ml-[11px]"><svg class="size-6" viewBox="0 0 24 24"><rect x="1.500" y="1.500" width="21" height="21" fill="none" stroke="#444" stroke-width="3"/><path d="M5 12l5-4v3h4V8l5 4-5 4v-3h-4v3z" fill="#444"/></svg></button>
  </footer>
</div>
<script>
  // Rulers: one cell per 10 mm
  const rx = document.getElementById('ruler-x');
  for (let n = 10; n <= 290; n += 10) {
    rx.insertAdjacentHTML('beforeend', `<span class="flex-1 basis-0 overflow-hidden border-l border-[#d0d0d0] pl-[2px]">${n}</span>`);
  }
  const ry = document.getElementById('ruler-y');
  for (let n = -10; n <= 210; n += 10) {
    ry.insertAdjacentHTML('beforeend', `<span class="flex flex-1 basis-0 items-start overflow-hidden border-t border-[#d0d0d0] pt-[2px]"><b class="rotate-180 font-normal [writing-mode:vertical-rl]">${n}</b></span>`);
  }
  // Colour bar
  const colors = 'b30614 d60a1c c8507c e65868 ed7074 e660a0 e297b8 ef8e88 f08e9c ffa07c f0ab98 f6beba e9d3ea ffd2e6 ffdee4 0f244f 203a70 432f78 07488c 0467a4 3f62ae 5282c4 0082d4 0590cf 2ca6e2 00b8f4 30ccff 8cc4ec a0daf0 d0eaf6 004434 00582f 006460 586e2c 007c46 209840 00ae9c 50bec4 1ccfb0 48bc7e 04b050 80ba10 a6d064 bcda40 cce6c8 e44f20 ee6800 f08600 f69a54 f2a400 ffb200 ffb838 fcca30 ffd800 fff000 fcf080 ffd474 eccc98 ffdca8 ffe8d0 7c3072 843e86 68409c 7a589c 9a6aa4 a05a8c d07cb4 aa90d0 c6a4cc ecc0dc 5a2a18 783a2e 92502a aa5428 c07840 b4866c deb684 d4cac8 c8d4cc 000000 403a3c 5a5858 707070 888888 9c9e9e b2b4b4 cccece dcdcdc eeeeee ffffff'.split(' ');
  document.getElementById('swatches').innerHTML = colors.map(c => `<span class="flex-1 border-l border-[#f5f5f5]" style="background:#${c}"></span>`).join('');
</script>
</body>
</html>
